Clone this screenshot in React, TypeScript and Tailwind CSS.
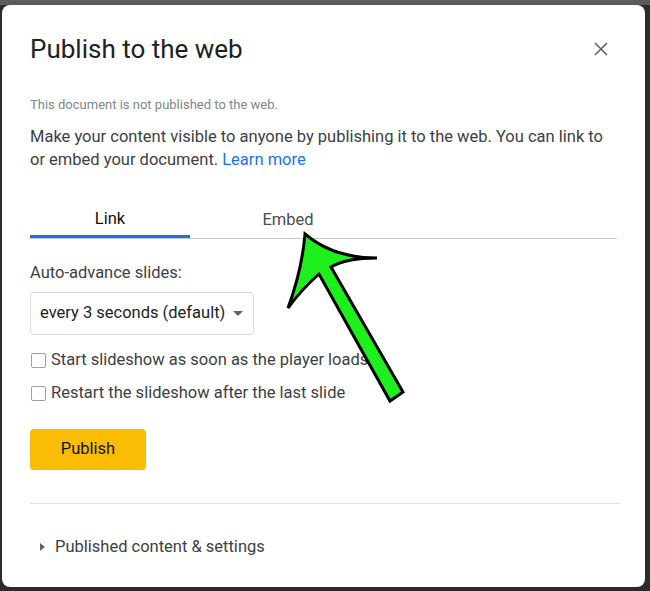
const App = () => {
  return (
    <div className="relative h-[591px] w-[650px] overflow-hidden bg-[#2b2b2b] font-['Roboto',sans-serif]">
      <div className="h-[5px] w-full bg-[#5c5c5c]" />
      <div className="ml-[2px] h-[582px] w-[643px] rounded-[8px] bg-white px-[28px] pt-[28px]">
        <header className="flex items-center justify-between">
          <h1 className="text-[26px] leading-[32px] text-[#202124]">
            Publish to the web
          </h1>

          <button type="button" className="flex h-8 w-8 items-center justify-center">
            <svg width="16" height="16" viewBox="0 0 16 16" className="text-[#5f6368]">
              <path
                d="M2 2 L14 14 M14 2 L2 14"
                stroke="currentColor"
                strokeWidth="1.6"
                fill="none"
              />
            </svg>
          </button>
        </header>

        <p className="mt-[32px] text-[13px] leading-[16px] text-[#80868b]">
          This document is not published to the web.
        </p>

        <p className="mt-[12px] text-[16.5px] leading-[23px] text-[#3c4043]">
          Make your content visible to anyone by publishing it to the web. You
          can link to or embed your document.{" "}
          <span className="text-[#1a73e8]">Learn more</span>
        </p>

        <nav className="mt-[27px] flex border-b border-[#c4c7cc]">
          <div className="-mb-px flex h-[40px] w-[160px] items-center justify-center border-b-[3px] border-[#1a73e8] pt-[6px] text-[16.5px] text-[#111111]">
            Link
          </div>
          <div className="flex h-[40px] w-[196px] items-center justify-center pt-[4px] text-[16.5px] text-[#4a4d52]">
            Embed
          </div>
        </nav>

        <p className="mt-[22px] text-[16.5px] leading-[24px] text-[#3c4043]">
          Auto-advance slides:
        </p>

        <div className="mt-[7px] flex h-[43px] w-[224px] items-center justify-between rounded-[4px] border border-[#dadce0] pl-[9px] pr-[10px] text-[16.5px] text-[#202124]">
          <span>every 3 seconds (default)</span>
          <svg width="10" height="5" viewBox="0 0 10 5">
            <path d="M0 0 L10 0 L5 5 Z" fill="#5f6368" />
          </svg>
        </div>

        <label className="mt-[13px] flex h-[24px] items-center gap-[5px] pl-px text-[16.5px] text-[#3c4043]">
          <span className="h-[15px] w-[15px] rounded-[2px] border border-[#9aa0a6]" />
          Start slideshow as soon as the player loads
        </label>

        <label className="mt-[9px] flex h-[24px] items-center gap-[5px] pl-px text-[16.5px] text-[#3c4043]">
          <span className="h-[15px] w-[15px] rounded-[2px] border border-[#9aa0a6]" />
          Restart the slideshow after the last slide
        </label>

        <button
          type="button"
          className="mt-[24px] flex h-[41px] w-[116px] items-center justify-center rounded-[4px] bg-[#fbbc04] text-[16.5px] text-[#111111]"
        >
          Publish
        </button>

        <div className="mt-[33px] h-px w-[590px] bg-[#e0e0e0]" />

        <div className="mt-[31px] flex h-[24px] items-center gap-[10px] pl-[10px] text-[16.5px] text-[#3c4043]">
          <svg width="5" height="8" viewBox="0 0 5 8">
            <path d="M0 0 L5 4 L0 8 Z" fill="#5f6368" />
          </svg>
          Published content &amp; settings
        </div>
      </div>

      <svg
        className="pointer-events-none absolute left-0 top-0"
        width="650"
        height="591"
        viewBox="0 0 650 591"
      >
        <path
          d="M305 234 Q333 258 377 258 Q346 258 331 267 L403 392 L390 401 L319 274 Q301 290 288 308 Q302 270 305 234 Z"
          fill="#1ef01e"
          stroke="#000"
          strokeWidth="3"
        />
      </svg>
    </div>
  );
};

export default App;
